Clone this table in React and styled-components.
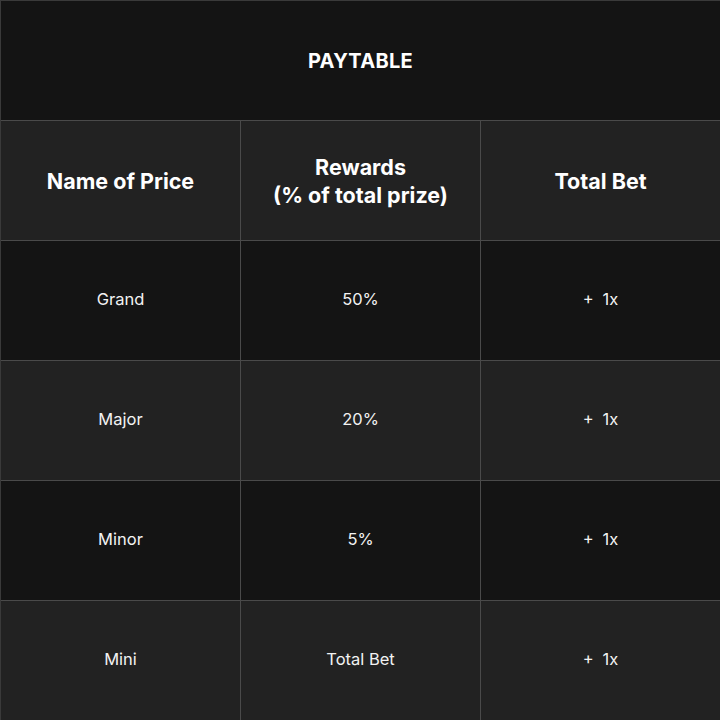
import React from 'react';
import styled, { createGlobalStyle } from 'styled-components';

const GlobalStyle = createGlobalStyle`
  html, body {
    margin: 0;
    padding: 0;
    background: #141414;
  }
  * {
    box-sizing: border-box;
  }
`;

const rows = [
  { name: 'Grand', reward: '50%', bet: '+ 1x' },
  { name: 'Major', reward: '20%', bet: '+ 1x' },
  { name: 'Minor', reward: '5%', bet: '+ 1x' },
  { name: 'Mini', reward: 'Total Bet', bet: '+ 1x' },
];

const Table = styled.div`
  width: 720px;
  height: 720px;
  display: grid;
  grid-template-columns: repeat(3, 240px);
  grid-template-rows: repeat(6, 120px);
  border-top: 1px solid #3a3a3a;
  border-left: 1px solid #3a3a3a;
  font-family: Inter, "Liberation Sans", sans-serif;
  color: #ffffff;
`;

const Title = styled.div`
  grid-column: 1 / -1;
  display: flex;
  align-items: center;
  justify-content: center;
  background: #141414;
  border-right: 1px solid #333;
  border-bottom: 1px solid #4a4a4a;
  font-size: 20px;
  font-weight: 700;
  letter-spacing: 0.3px;
`;

const Cell = styled.div`
  display: flex;
  align-items: center;
  justify-content: center;
  text-align: center;
  padding-bottom: ${(p) => (p.$head ? '0' : '3px')};
  background: ${(p) => (p.$dark ? '#141414' : '#222222')};
  border-right: 1px solid ${(p) => (p.$last ? '#333' : '#4a4a4a')};
  border-bottom: 1px solid #4a4a4a;
  font-size: ${(p) => (p.$head ? '21.5px' : '16.5px')};
  font-weight: ${(p) => (p.$head ? 700 : 400)};
  line-height: ${(p) => (p.$head ? '28px' : '20px')};
  word-spacing: ${(p) => (p.$wide ? '4px' : 'normal')};
  color: ${(p) => (p.$head ? '#ffffff' : '#f2f2f2')};
`;

export default function App() {
  return (
    <>
      <GlobalStyle />
      <Table>
        <Title>PAYTABLE</Title>
        <Cell $head>Name of Price</Cell>
        <Cell $head>
          Rewards
          <br />
          (% of total prize)
        </Cell>
        <Cell $head $last>Total Bet</Cell>
        {rows.map((r, i) => (
          <React.Fragment key={r.name}>
            <Cell $dark={i % 2 === 0}>{r.name}</Cell>
            <Cell $dark={i % 2 === 0}>{r.reward}</Cell>
            <Cell $dark={i % 2 === 0} $last $wide>{r.bet}</Cell>
          </React.Fragment>
        ))}
      </Table>
    </>
  );
}
